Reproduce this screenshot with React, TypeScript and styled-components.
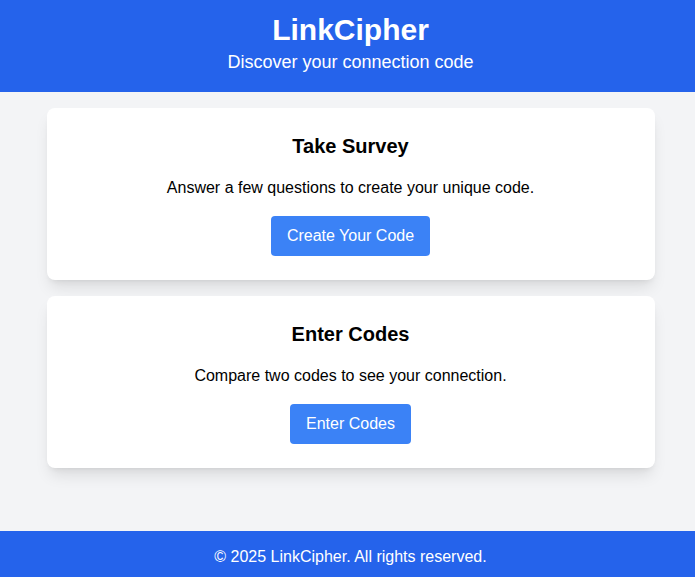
import styled, { createGlobalStyle } from 'styled-components';

const GlobalStyle = createGlobalStyle`
html, body {
  margin: 0;
  padding: 0;
  overflow: hidden;
  background-color: #f3f4f6;
  font-family: "Liberation Sans", Arial, sans-serif;
}
`;

const cards = [
  {
    title: 'Take Survey',
    text: 'Answer a few questions to create your unique code.',
    action: 'Create Your Code',
  },
  {
    title: 'Enter Codes',
    text: 'Compare two codes to see your connection.',
    action: 'Enter Codes',
  },
];

function App() {
  return (
    <Page>
      <GlobalStyle />
      <Header>
        <Title>LinkCipher</Title>
        <Subtitle>Discover your connection code</Subtitle>
      </Header>
      <Main>
        {cards.map((card) => (
          <Card key={card.title}>
            <CardTitle>{card.title}</CardTitle>
            <CardText>{card.text}</CardText>
            <ActionBtn>{card.action}</ActionBtn>
          </Card>
        ))}
      </Main>
      <Footer>© 2025 LinkCipher. All rights reserved.</Footer>
    </Page>
  );
}

const Page = styled.div`
width: 701px;
height: 577px;
display: flex;
flex-direction: column;
background-color: #f3f4f6;
`;

const Header = styled.header`
background-color: #2563eb;
color: #fff;
text-align: center;
padding: 12px 0 16px;
`;

const Title = styled.h1`
margin: 0;
font-size: 30px;
line-height: 36px;
font-weight: 700;
`;

const Subtitle = styled.p`
margin: 0;
font-size: 18px;
line-height: 28px;
`;

const Main = styled.main`
flex: 1;
display: flex;
flex-direction: column;
align-items: center;
gap: 16px;
padding-top: 16px;
`;

const Card = styled.section`
box-sizing: border-box;
width: 608px;
padding: 24px;
background-color: #fff;
border-radius: 8px;
box-shadow: 0 10px 15px -3px rgba(0, 0, 0, 0.1), 0 4px 6px -4px rgba(0, 0, 0, 0.1);
display: flex;
flex-direction: column;
align-items: center;
text-align: center;
`;

const CardTitle = styled.h2`
margin: 0 0 16px;
font-size: 20px;
line-height: 28px;
font-weight: 700;
color: #000;
`;

const CardText = styled.p`
margin: 0 0 16px;
font-size: 16px;
line-height: 24px;
color: #000;
`;

const ActionBtn = styled.button`
border: none;
border-radius: 4px;
background-color: #3b82f6;
color: #fff;
font-family: inherit;
font-size: 16px;
line-height: 24px;
padding: 8px 16px;
cursor: pointer;

&:hover {
  background-color: #2563eb;
}
`;

const Footer = styled.footer`
box-sizing: border-box;
height: 46px;
padding-top: 14px;
background-color: #2563eb;
color: #fff;
text-align: center;
font-size: 16px;
line-height: 24px;
`;

export default App;
